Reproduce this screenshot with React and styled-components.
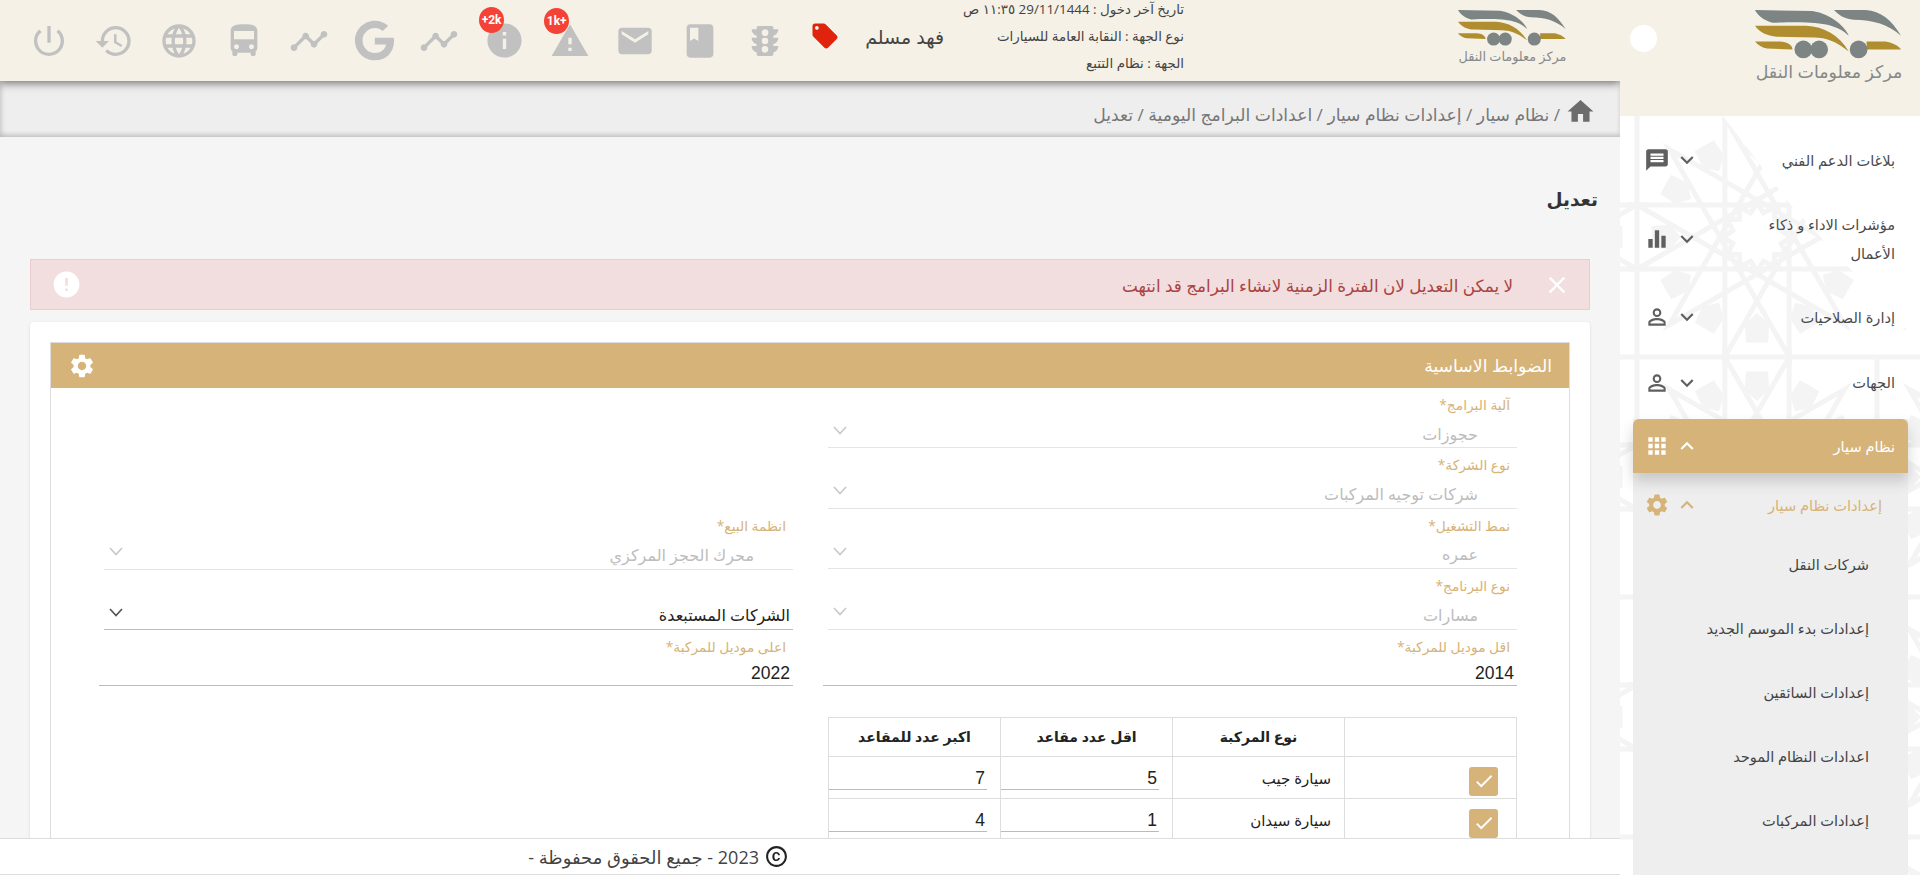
import React from "react";
import styled, { createGlobalStyle } from "styled-components";
import {
    MdPowerSettingsNew,
    MdHistory,
    MdLanguage,
    MdDirectionsBus,
    MdTimeline,
    MdInfo,
    MdWarning,
    MdEmail,
    MdBook,
    MdTraffic,
    MdLocalOffer,
    MdHome,
    MdMessage,
    MdEqualizer,
    MdPersonOutline,
    MdApps,
    MdSettings,
    MdExpandMore,
    MdExpandLess,
    MdClose,
    MdError,
    MdCheck,
    MdCopyright,
} from "react-icons/md";
import { FaGoogle } from "react-icons/fa";

const FONT = `"Open Sans", "DejaVu Sans", sans-serif`;
const GOLD = "#d6b378";

const GlobalStyle = createGlobalStyle`
    html, body {
        margin: 0;
        padding: 0;
        height: 875px;
        overflow: hidden;
        background: #f5f5f5;
        font-family: ${FONT};
    }
    * { box-sizing: border-box; }
`;

const Page = styled.div`
    direction: rtl;
    display: flex;
    width: 1920px;
    height: 875px;
    overflow: hidden;
    position: relative;
`;

const Sidebar = styled.aside`
    width: 300px;
    flex: none;
    height: 875px;
    background: #fff;
    position: relative;
    overflow: hidden;
    display: flex;
    flex-direction: column;
`;

const SideHead = styled.div`
    height: 116px;
    flex: none;
    background: #f5f1e6;
    display: flex;
    align-items: flex-start;
    justify-content: space-between;
    padding: 10px 17px 0 10px;
    position: relative;
    z-index: 1;
`;

const Dot = styled.div`
    width: 27px;
    height: 27px;
    border-radius: 50%;
    background: #fff;
    margin-top: 15px;
`;

const LogoWrap = styled.div`
    width: ${(p) => p.$w}px;
    flex: none;
    display: flex;
    flex-direction: column;
    align-items: center;
    margin-bottom: ${(p) => p.$bottom || 0}px;
`;

const LogoText = styled.div`
    color: #85898a;
    font-size: ${(p) => p.$size}px;
    line-height: 1.1;
    white-space: nowrap;
    margin-top: ${(p) => p.$gap}px;
`;

const PatternLayer = styled.svg`
    position: absolute;
    left: 0;
    top: 116px;
    width: 300px;
    height: 759px;
`;

const Menu = styled.nav`
    position: relative;
    z-index: 1;
    display: flex;
    flex-direction: column;
    padding-top: 13px;
`;

const MenuItem = styled.div`
    height: ${(p) => p.$h}px;
    display: flex;
    align-items: center;
    padding-right: 25px;
    font-size: 14.6px;
    line-height: 29px;
`;

const MenuLabel = styled.div`
    flex: 1;
    color: ${(p) => p.$color || "#4a4a4a"};
    padding-left: 45px;
`;

const MenuIcons = styled.div`
    width: ${(p) => (p.$inset ? 67 : 80)}px;
    flex: none;
    display: flex;
    align-items: center;
    gap: 4px;
    color: ${(p) => p.$color || "#5f5f5f"};
    padding-left: ${(p) => (p.$inset ? 11 : 24)}px;
`;

const Chevron = styled.span`
    display: flex;
`;

const ActiveGroup = styled.div`
    margin: 1px 12px 0 13px;
    background: #eeeeee;
    height: 460px;
`;

const ActiveItem = styled.div`
    height: 54px;
    background: ${GOLD};
    border-radius: 6px 6px 0 0;
    box-shadow: 0 8px 14px rgba(60, 60, 60, 0.22);
    display: flex;
    align-items: center;
    padding-right: 13px;
    font-size: 14.6px;
`;

const SubHead = styled.div`
    height: 59px;
    display: flex;
    align-items: center;
    padding: 4px 26px 0 0;
    font-size: 14.6px;
`;

const SubItem = styled.div`
    height: 64px;
    display: flex;
    align-items: center;
    padding-right: 39px;
    color: #444;
    font-size: 14.6px;
`;

const Main = styled.main`
    flex: 1;
    min-width: 0;
    display: flex;
    flex-direction: column;
    height: 875px;
    overflow: hidden;
`;

const TopBar = styled.header`
    height: 81px;
    flex: none;
    background: #f5f1e6;
    box-shadow: 0 3px 8px rgba(0, 0, 0, 0.45);
    position: relative;
    z-index: 2;
    display: flex;
    align-items: center;
    padding-right: 53px;
`;

const UserInfo = styled.div`
    width: 240px;
    margin-right: 274px;
    margin-bottom: 8px;
    flex: none;
    font-size: 13.4px;
    color: #444;
    display: flex;
    flex-direction: column;
    line-height: 27px;
    white-space: nowrap;
`;

const UserName = styled.div`
    font-size: 19px;
    color: #444;
    width: 104.5px;
    flex: none;
    margin-bottom: 8px;
`;

const TagBtn = styled.div`
    color: #e0230c;
    display: flex;
    width: 30px;
    flex: none;
    margin-top: -9px;
`;

const IconRow = styled.div`
    display: flex;
    align-items: center;
    color: #c1c1c1;
    gap: 20.12px;
    margin-right: 22px;
`;

const IconBtn = styled.div`
    position: relative;
    display: flex;
    width: 45px;
    flex: none;
    justify-content: center;
`;

const Badge = styled.span`
    position: absolute;
    top: -13px;
    right: 23px;
    width: 25px;
    height: 26px;
    border-radius: 50%;
    background: #f44336;
    color: #fff;
    font: bold 12px "Roboto", sans-serif;
    display: flex;
    align-items: center;
    justify-content: center;
    direction: ltr;
`;

const Breadcrumb = styled.div`
    height: 56px;
    flex: none;
    background: #eeeeee;
    box-shadow: inset 0 -3px 4px rgba(0, 0, 0, 0.14), inset 3px 0 4px rgba(0, 0, 0, 0.07);
    display: flex;
    align-items: center;
    padding: 5px 24px 0 0;
    color: #777;
    font-size: 17.2px;
    gap: 5px;
`;

const HomeIcon = styled.span`
    display: flex;
    color: #6c6c6c;
`;

const Trail = styled.span`
    padding-top: 6px;
`;

const Content = styled.div`
    flex: 1;
    padding: 0 22px 0 30px;
    overflow: hidden;
`;

const PageTitle = styled.h1`
    margin: 47px 0 0 0;
    height: 75px;
    font-size: 18.5px;
    font-weight: bold;
    color: #333;
    line-height: 30px;
`;

const Alert = styled.div`
    height: 51px;
    margin-right: 8px;
    background: #f2dede;
    border: 1px solid #ebccd1;
    color: #a94442;
    display: flex;
    align-items: center;
    padding: 0 18px 0 20px;
    font-size: 16.8px;
    gap: 30px;
`;

const AlertText = styled.div`
    flex: 1;
    padding-top: 2px;
`;

const AlertMark = styled.span`
    display: flex;
    color: #fff;
`;

const Card = styled.section`
    margin: 12px 8px 0 0;
    background: #fff;
    border-radius: 4px;
    box-shadow: 0 1px 3px rgba(0, 0, 0, 0.12);
    padding: 20px;
    height: 600px;
`;

const Panel = styled.div`
    border: 1px solid #ddd;
    height: 100%;
`;

const PanelHead = styled.div`
    height: 45px;
    background: ${GOLD};
    color: #fff;
    display: flex;
    align-items: center;
    justify-content: space-between;
    padding: 0 17px 0 17px;
    font-size: 17.3px;
`;

const FormGrid = styled.div`
    display: grid;
    grid-template-columns: 689px 689px;
    column-gap: 35px;
    padding-right: 52px;
`;

const Column = styled.div`
    display: flex;
    flex-direction: column;
`;

const ColumnLeft = styled(Column)`
    padding-top: 121px;
`;

const Field = styled.div`
    height: ${(p) => p.$h || 60.5}px;
    flex: none;
    border-bottom: 1px solid ${(p) => (p.$off ? "#e4e4e4" : "#bbb")};
    margin-left: ${(p) => (p.$wide ? -5 : 0)}px;
    display: flex;
    flex-direction: column;
`;

const FieldLabel = styled.label`
    color: ${GOLD};
    font-size: 13.8px;
    line-height: 33px;
    padding-right: 7px;
    height: 32px;
    flex: none;
    white-space: nowrap;
`;

const FieldBody = styled.div`
    flex: 1;
    display: flex;
    align-items: center;
    justify-content: space-between;
    padding: ${(p) => (p.$off ? "0 39px 0 5px" : "0 3px 0 5px")};
    color: ${(p) => (p.$off ? "#bdbdbd" : "#222")};
    font-size: 16px;
    line-height: 1;
`;

const ArrowSvg = styled.svg`
    display: block;
    margin-top: -6px;
`;

const NumberValue = styled.div`
    direction: ltr;
    text-align: right;
    color: #222;
    font: 17.5px "Liberation Sans", sans-serif;
`;

const VehicleTable = styled.table`
    margin-top: 31px;
    width: 689px;
    flex: none;
    border-collapse: collapse;
    table-layout: fixed;
    color: #222;
    th, td {
        border: 1px solid #ddd;
        vertical-align: top;
    }
    th {
        height: 39px;
        font-weight: bold;
        font-size: 14px;
        vertical-align: middle;
    }
    td {
        height: 42px;
        padding: 0;
    }
`;

const CheckBox = styled.div`
    width: 29px;
    height: 29px;
    margin: 10px 18px 0 0;
    background: ${GOLD};
    border-radius: 3px;
    color: #fff;
    display: flex;
    align-items: center;
    justify-content: center;
`;

const NameCell = styled.td`
    && {
        padding: 11px 13px 0 0;
        font-size: 15px;
    }
`;

const NumberInput = styled.div`
    height: 33px;
    width: 158px;
    margin-right: auto;
    border-bottom: 1px solid #bbb;
    direction: ltr;
    text-align: right;
    padding: 11px 2px 0 0;
    font: 17.5px/20px "Liberation Sans", sans-serif;
    color: #222;
`;

const Footer = styled.footer`
    position: absolute;
    left: 0;
    bottom: 0;
    width: 1620px;
    height: 37px;
    background: #fff;
    border-top: 1px solid #ddd;
    border-bottom: 1px solid #ddd;
    z-index: 3;
    display: flex;
    align-items: center;
    padding-right: 831px;
    color: #444;
    font-size: 18px;
    gap: 5px;
    white-space: nowrap;
`;

const CopyMark = styled.span`
    display: flex;
    color: #222;
`;

// logo, same drawing in the sidebar and the top bar
const Logo = ({ w }) => (
    <svg viewBox="0 0 150 50" width={w} height={(w * 50) / 150}>
        <path d="M0 0 L58 1 C78 4 92 18 95 26 C82 14 65 11 18 13 C10 11 3 6 0 0Z" fill="#7c8584" />
        <path d="M80 0 L112 0 C128 1 138 10 148 26 C135 15 120 10 100 10 C90 9 85 5 80 0Z" fill="#7c8584" />
        <path d="M0 16 L52 16 C70 17 85 25 95 42 C82 32 72 28 60 28 L22 27 C12 26 5 23 0 16Z" fill="#b08d2f" />
        <path d="M0 32 L25 32 C33 32 38 36 38 40 L12 39 C7 38 3 36 0 32Z" fill="#b08d2f" />
        <path d="M113 32 L132 32 C140 33 146 37 148 40 L112 40 C114 37 113 34 113 32Z" fill="#b08d2f" />
        <circle cx="49" cy="40" r="9" fill="#7c8584" />
        <circle cx="65" cy="40" r="9" fill="#7c8584" />
        <circle cx="105" cy="40" r="9" fill="#7c8584" />
    </svg>
);

const SelectArrow = ({ off }) => (
    <ArrowSvg width="14" height="9" viewBox="0 0 14 9">
        <polyline points="1,1 7,7.5 13,1" fill="none" stroke={off ? "#c9c9c9" : "#555"} strokeWidth="1.7" />
    </ArrowSvg>
);

const polar = (cx, cy, r, deg) => {
    const a = (deg * Math.PI) / 180;
    return [cx + r * Math.cos(a), cy + r * Math.sin(a)];
};

// one 12 fold wheel of the background ornament
const Wheel = ({ cx, cy }) => {
    const outer = [];
    for (let i = 0; i < 12; i++) outer.push(polar(cx, cy, 124, 15 + i * 30));
    const star = outer.map((_, i) => outer[(i * 5) % 12].join(",")).join(" ");
    const zig = [];
    for (let i = 0; i < 24; i++) zig.push(polar(cx, cy, i % 2 ? 25 : 34, i * 15).join(","));
    const pentagons = [];
    for (let i = 0; i < 12; i++) {
        const deg = i * 30;
        pentagons.push(
            [
                polar(cx, cy, 76, deg),
                polar(cx, cy, 88, deg - 8),
                polar(cx, cy, 106, deg - 6),
                polar(cx, cy, 106, deg + 6),
                polar(cx, cy, 88, deg + 8),
            ]
                .map((pt) => pt.join(","))
                .join(" ")
        );
    }
    return (
        <g>
            <polygon points={star} fill="none" stroke="#f4f4f4" strokeWidth="5" />
            <polygon points={zig.join(" ")} fill="#fff" stroke="#f4f4f4" strokeWidth="5" />
            {pentagons.map((pts) => (
                <polygon key={pts} points={pts} fill="#f4f4f4" />
            ))}
        </g>
    );
};

const SidePattern = () => (
    <PatternLayer viewBox="0 0 300 759">
        {[121, 361, 601, 841].map((y) =>
            [-103, 137, 377].map((x) => <Wheel key={x + "-" + y} cx={x} cy={y} />)
        )}
        <g stroke="#f4f4f4" strokeWidth="5">
            <line x1="0" y1="241" x2="300" y2="241" />
            <line x1="0" y1="481" x2="300" y2="481" />
            <line x1="0" y1="721" x2="300" y2="721" />
            <line x1="17" y1="0" x2="17" y2="759" />
            <line x1="257" y1="241" x2="257" y2="759" />
        </g>
        <polygon points="103,0 170,88 247,171 300,228 300,0" fill="#fff" />
    </PatternLayer>
);

const menuTop = [
    { label: "بلاغات الدعم الفني", icon: <MdMessage size={26} />, h: 62 },
    { label: "مؤشرات الاداء و ذكاء الأعمال", icon: <MdEqualizer size={26} />, h: 96 },
    { label: "إدارة الصلاحيات", icon: <MdPersonOutline size={26} />, h: 60 },
    { label: "الجهات", icon: <MdPersonOutline size={26} />, h: 71 },
];

const subItems = [
    "شركات النقل",
    "إعدادات بدء الموسم الجديد",
    "إعدادات السائقين",
    "اعدادات النظام الموحد",
    "إعدادات المركبات",
];

const topIcons = [
    { icon: <MdTraffic size={40} /> },
    { icon: <MdBook size={40} /> },
    { icon: <MdEmail size={40} /> },
    { icon: <MdWarning size={40} />, badge: "1k+" },
    { icon: <MdInfo size={41} />, badge: "+2k" },
    { icon: <MdTimeline size={40} /> },
    { icon: <FaGoogle size={41} /> },
    { icon: <MdTimeline size={40} /> },
    { icon: <MdDirectionsBus size={40} /> },
    { icon: <MdLanguage size={40} /> },
    { icon: <MdHistory size={40} /> },
    { icon: <MdPowerSettingsNew size={40} /> },
];

const rightFields = [
    { label: "آلية البرامج*", value: "حجوزات", h: 60 },
    { label: "نوع الشركة*", value: "شركات توجيه المركبات" },
    { label: "نمط التشغيل*", value: "عمره" },
    { label: "نوع البرنامج*", value: "مسارات" },
];

const vehicles = [
    { name: "سيارة جيب", min: 5, max: 7 },
    { name: "سيارة سيدان", min: 1, max: 4 },
];

export default function App() {
    return (
        <Page>
            <GlobalStyle />
            <Sidebar>
                <SidePattern />
                <SideHead>
                    <LogoWrap $w={148}>
                        <Logo w={148} />
                        <LogoText $size={17.4} $gap={3}>مركز معلومات النقل</LogoText>
                    </LogoWrap>
                    <Dot />
                </SideHead>
                <Menu>
                    {menuTop.map((m) => (
                        <MenuItem key={m.label} $h={m.h}>
                            <MenuLabel>{m.label}</MenuLabel>
                            <MenuIcons>
                                <Chevron><MdExpandMore size={26} /></Chevron>
                                {m.icon}
                            </MenuIcons>
                        </MenuItem>
                    ))}
                    <ActiveGroup>
                        <ActiveItem>
                            <MenuLabel $color="#fff">نظام سيار</MenuLabel>
                            <MenuIcons $color="#fff" $inset>
                                <Chevron><MdExpandLess size={26} /></Chevron>
                                <MdApps size={26} />
                            </MenuIcons>
                        </ActiveItem>
                        <SubHead>
                            <MenuLabel $color={GOLD}>إعدادات نظام سيار</MenuLabel>
                            <MenuIcons $color={GOLD} $inset>
                                <Chevron><MdExpandLess size={26} /></Chevron>
                                <MdSettings size={26} />
                            </MenuIcons>
                        </SubHead>
                        {subItems.map((s) => (
                            <SubItem key={s}>{s}</SubItem>
                        ))}
                    </ActiveGroup>
                </Menu>
            </Sidebar>
            <Main>
                <TopBar>
                    <LogoWrap $w={109} $bottom={8}>
                        <Logo w={109} />
                        <LogoText $size={12.8} $gap={2}>مركز معلومات النقل</LogoText>
                    </LogoWrap>
                    <UserInfo>
                        <div>تاريخ آخر دخول : 29/11/1444 ١١:٣٥ ص</div>
                        <div>نوع الجهة : النقابة العامة للسيارات</div>
                        <div>الجهة : نظام التتبع</div>
                    </UserInfo>
                    <UserName>فهد مسلم</UserName>
                    <TagBtn><MdLocalOffer size={30} /></TagBtn>
                    <IconRow>
                        {topIcons.map((t, i) => (
                            <IconBtn key={i}>
                                {t.badge && <Badge>{t.badge}</Badge>}
                                {t.icon}
                            </IconBtn>
                        ))}
                    </IconRow>
                </TopBar>
                <Breadcrumb>
                    <HomeIcon><MdHome size={31} /></HomeIcon>
                    <Trail>/ نظام سيار / إعدادات نظام سيار / اعدادات البرامج اليومية / تعديل</Trail>
                </Breadcrumb>
                <Content>
                    <PageTitle>تعديل</PageTitle>
                    <Alert>
                        <AlertMark><MdClose size={28} /></AlertMark>
                        <AlertText>لا يمكن التعديل لان الفترة الزمنية لانشاء البرامج قد انتهت</AlertText>
                        <AlertMark><MdError size={31} /></AlertMark>
                    </Alert>
                    <Card>
                        <Panel>
                            <PanelHead>
                                <span>الضوابط الاساسية</span>
                                <MdSettings size={28} />
                            </PanelHead>
                            <FormGrid>
                                <Column>
                                    {rightFields.map((f) => (
                                        <Field key={f.label} $off $h={f.h}>
                                            <FieldLabel>{f.label}</FieldLabel>
                                            <FieldBody $off>
                                                <span>{f.value}</span>
                                                <SelectArrow off />
                                            </FieldBody>
                                        </Field>
                                    ))}
                                    <Field $h={56} $wide>
                                        <FieldLabel>اقل موديل للمركبة*</FieldLabel>
                                        <FieldBody><NumberValue>2014</NumberValue></FieldBody>
                                    </Field>
                                    <VehicleTable>
                                        <thead>
                                            <tr>
                                                <th />
                                                <th>نوع المركبة</th>
                                                <th>اقل عدد مقاعد</th>
                                                <th>اكبر عدد للمقاعد</th>
                                            </tr>
                                        </thead>
                                        <tbody>
                                            {vehicles.map((v) => (
                                                <tr key={v.name}>
                                                    <td><CheckBox><MdCheck size={22} /></CheckBox></td>
                                                    <NameCell>{v.name}</NameCell>
                                                    <td><NumberInput>{v.min}</NumberInput></td>
                                                    <td><NumberInput>{v.max}</NumberInput></td>
                                                </tr>
                                            ))}
                                        </tbody>
                                    </VehicleTable>
                                </Column>
                                <ColumnLeft>
                                    <Field $off>
                                        <FieldLabel>انظمة البيع*</FieldLabel>
                                        <FieldBody $off>
                                            <span>محرك الحجز المركزي</span>
                                            <SelectArrow off />
                                        </FieldBody>
                                    </Field>
                                    <Field>
                                        <FieldLabel />
                                        <FieldBody>
                                            <span>الشركات المستبعدة</span>
                                            <SelectArrow />
                                        </FieldBody>
                                    </Field>
                                    <Field $h={56} $wide>
                                        <FieldLabel>اعلى موديل للمركبة*</FieldLabel>
                                        <FieldBody><NumberValue>2022</NumberValue></FieldBody>
                                    </Field>
                                </ColumnLeft>
                            </FormGrid>
                        </Panel>
                    </Card>
                </Content>
            </Main>
            <Footer>
                <CopyMark><MdCopyright size={25} /></CopyMark>
                <span>2023 - جميع الحقوق محفوظة -</span>
            </Footer>
        </Page>
    );
}
